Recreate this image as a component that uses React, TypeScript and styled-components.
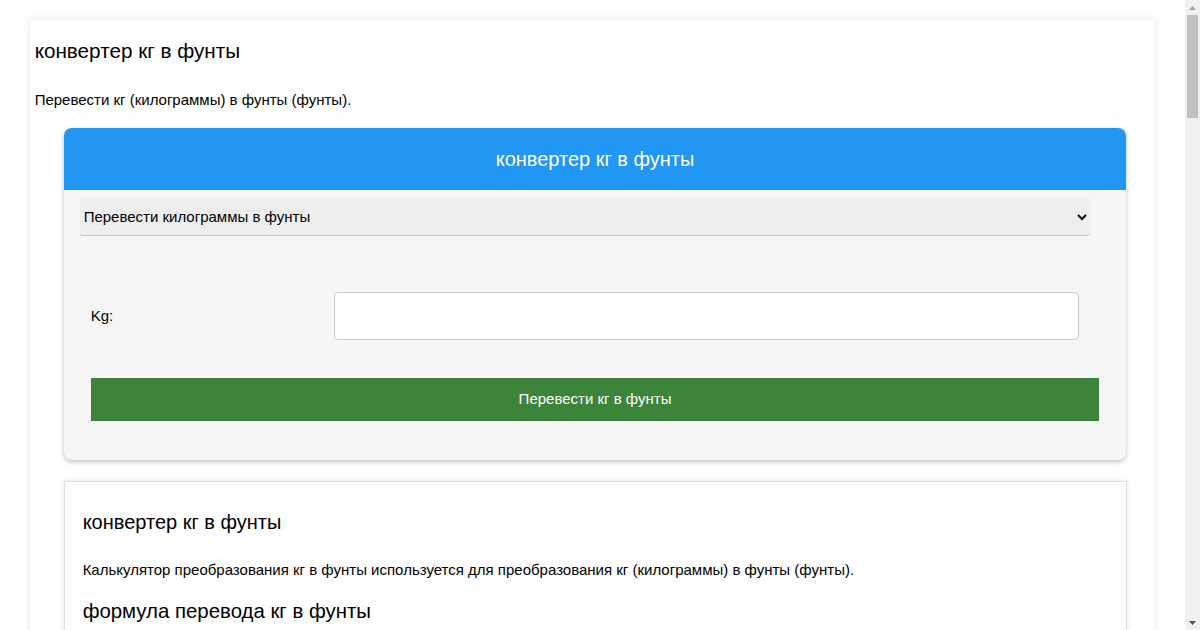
import React, { useState } from 'react';
import styled, { createGlobalStyle } from 'styled-components';

const GlobalStyle = createGlobalStyle`
  body {
    margin: 0;
    background: #ffffff;
    font-family: 'Liberation Sans', Arial, sans-serif;
    color: #000000;
  }
`;

const rows = [
  [1, 2.2046],
  [2, 4.4092],
  [3, 6.6139],
  [5, 11.0231],
  [10, 22.0462],
  [20, 44.0925],
  [50, 110.2311],
  [100, 220.4623],
  [500, 1102.3113],
  [1000, 2204.6226],
];

const Arrow: React.FC<{ down?: boolean }> = ({ down }) => (
  <ArrowBox>
    <svg width="7" height="4" viewBox="0 0 7 4">
      <polygon points={down ? '0,0 7,0 3.5,4' : '0,4 7,4 3.5,0'} fill={down ? '#505050' : '#a3a3a3'} />
    </svg>
  </ArrowBox>
);

const App: React.FC = () => {
  const [value, setValue] = useState<string>('');

  return (
    <>
      <GlobalStyle />
      <Viewport>
        <Scroller>
          <Page>
            <Title>конвертер кг в фунты</Title>
            <Lead>Перевести кг (килограммы) в фунты (фунты).</Lead>
            <Calculator>
              <CalcHeader>конвертер кг в фунты</CalcHeader>
              <CalcBody>
                <Select defaultValue="kg">
                  <option value="kg">Перевести килограммы в фунты</option>
                  <option value="lb">Перевести фунты в килограммы</option>
                </Select>
                <Row>
                  <Label>Kg:</Label>
                  <Input value={value} onChange={(e) => setValue(e.target.value)} />
                </Row>
                <Submit type="button">Перевести кг в фунты</Submit>
              </CalcBody>
            </Calculator>
            <Article>
              <Heading>конвертер кг в фунты</Heading>
              <Text>
                Калькулятор преобразования кг в фунты используется для преобразования кг (килограммы) в фунты (фунты).
              </Text>
              <Heading large>формула перевода кг в фунты</Heading>
              <Text>1 кг = 2.2046226218 фунты</Text>
              <Text>1 фунты = 0.45359237 кг</Text>
              <Heading large>Таблица перевода кг в фунты</Heading>
              <Table>
                <thead>
                  <tr>
                    <Th>кг</Th>
                    <Th>фунты</Th>
                  </tr>
                </thead>
                <tbody>
                  {rows.map(([kg, lb]) => (
                    <tr key={kg}>
                      <Td>{kg} кг</Td>
                      <Td>{lb} фунты</Td>
                    </tr>
                  ))}
                </tbody>
              </Table>
              <Heading large>Как перевести кг в фунты</Heading>
              <Text>Чтобы перевести кг в фунты, умножьте значение в кг на 2.2046226218.</Text>
              <Text>Пример: 5 кг = 5 × 2.2046226218 = 11.023113109 фунты</Text>
            </Article>
          </Page>
        </Scroller>
        <ScrollTrack>
          <Arrow />
          <Thumb />
          <TrackFill />
          <Arrow down />
        </ScrollTrack>
      </Viewport>
    </>
  );
};

export default App;

const Viewport = styled.div`
  display: grid;
  grid-template-columns: 1fr 15px;
  height: 100vh;
`;

const Scroller = styled.div`
  overflow-y: auto;
  scrollbar-width: none;
`;

const ScrollTrack = styled.div`
  display: flex;
  flex-direction: column;
  background: #f1f1f1;
`;

const ArrowBox = styled.div`
  height: 15px;
  display: flex;
  align-items: center;
  justify-content: center;
`;

const Thumb = styled.div`
  height: 103px;
  margin: 0 2px;
  background: #c1c1c1;
`;

const TrackFill = styled.div`
  flex: 1;
`;

const Page = styled.div`
  width: 95%;
  margin: 20px auto;
  padding: 5px;
  box-sizing: border-box;
  background: #ffffff;
  box-shadow: 0 0 8px rgba(0, 0, 0, 0.1);
`;

const Title = styled.h1`
  margin: 14px 0 0;
  font-size: 20.7px;
  font-weight: normal;
  line-height: 23px;
`;

const Lead = styled.p`
  margin: 29px 0 20px;
  font-size: 15px;
  line-height: 17px;
`;

const Calculator = styled.div`
  margin: 0 24px 0 29px;
  border-radius: 8px;
  overflow: hidden;
  background: #f6f6f6;
  box-shadow: 0 2px 5px rgba(0, 0, 0, 0.25);
`;

const CalcHeader = styled.div`
  height: 62px;
  display: flex;
  align-items: center;
  justify-content: center;
  background: #2196f3;
  color: #ffffff;
  font-size: 20px;
`;

const CalcBody = styled.div`
  padding: 8px 16px 39px;
`;

const Select = styled.select`
  display: block;
  width: calc(100% - 20px);
  height: 38px;
  padding: 0;
  background: #eeeeee;
  border: none;
  border-bottom: 1px solid #c8c8c8;
  border-radius: 3px;
  font-family: 'Liberation Sans', Arial, sans-serif;
  font-size: 15px;
  color: #000000;
`;

const Row = styled.div`
  display: grid;
  grid-template-columns: 243px 1fr;
  align-items: center;
  margin: 56px 31px 0 11px;
`;

const Label = styled.label`
  font-size: 15px;
  margin-bottom: 2px;
`;

const Input = styled.input`
  height: 48px;
  box-sizing: border-box;
  border: 1px solid #cccccc;
  border-radius: 4px;
  background: #ffffff;
  padding: 0 10px;
  font-size: 15px;
`;

const Submit = styled.button`
  display: block;
  width: calc(100% - 22px);
  height: 43px;
  margin: 38px 11px 0;
  padding: 0 0 3px;
  border: none;
  background: #3c843a;
  color: #ffffff;
  font-family: 'Liberation Sans', Arial, sans-serif;
  font-size: 15px;
`;

const Article = styled.div`
  margin: 21px 23px 0 29px;
  padding: 19px 18px 2400px;
  border: 1px solid #dddddd;
  box-shadow: 0 0 6px rgba(0, 0, 0, 0.1);
  background: #ffffff;
`;

const Heading = styled.h2<{ large?: boolean }>`
  margin: 10px 0 0;
  font-size: ${(props) => (props.large ? '20.4px' : '20px')};
  font-weight: normal;
  line-height: 23px;

  & + p {
    margin-top: 27px;
  }
`;

const Text = styled.p`
  margin: 0 0 22px;
  font-size: 15px;
  line-height: 17px;
`;

const Table = styled.table`
  width: 100%;
  margin: 20px 0;
  border-collapse: collapse;
  font-size: 15px;
`;

const Th = styled.th`
  padding: 10px;
  border: 1px solid #dddddd;
  background: #2196f3;
  color: #ffffff;
  font-weight: normal;
  text-align: left;
`;

const Td = styled.td`
  padding: 10px;
  border: 1px solid #dddddd;
`;
